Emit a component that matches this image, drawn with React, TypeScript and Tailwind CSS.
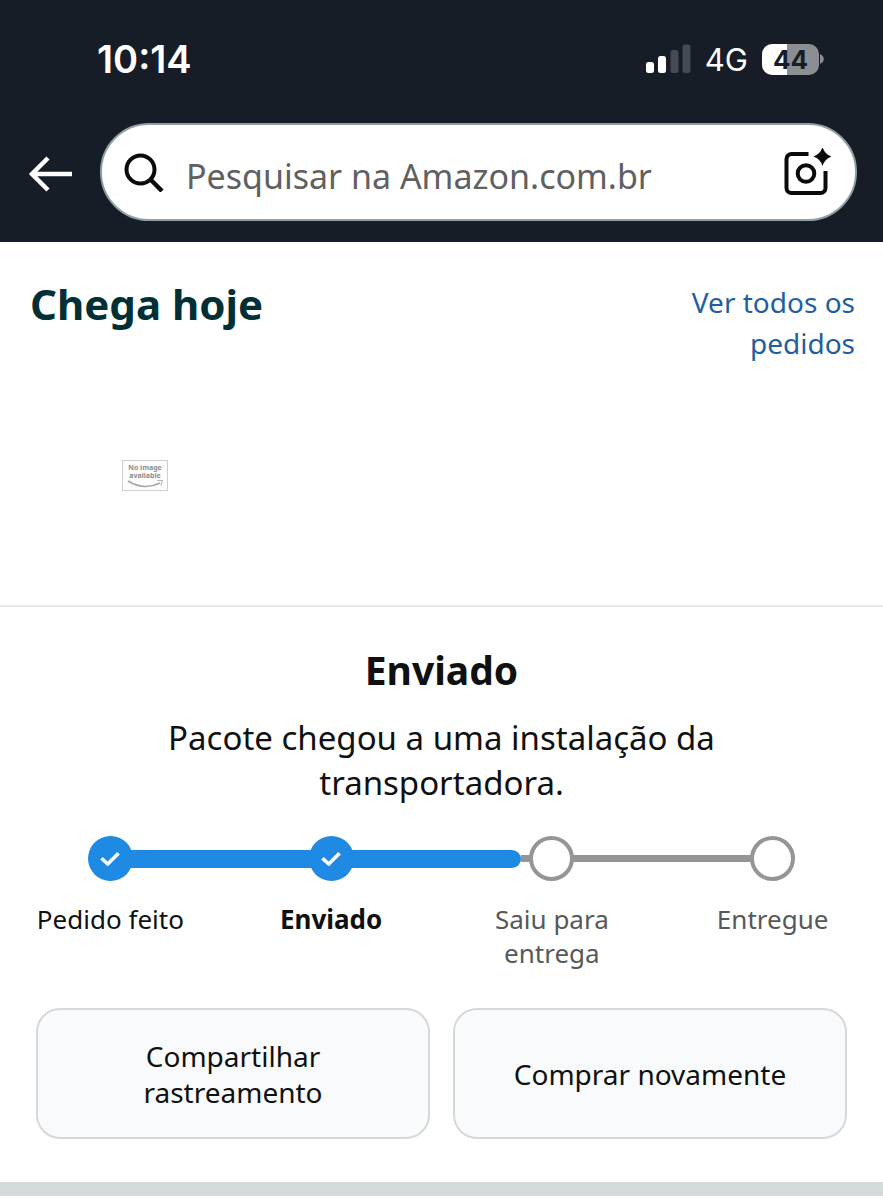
import React, { useState } from "react";
import clsx from "clsx";

interface Step {
  label: string;
  state: "done" | "current" | "pending";
}

const steps: Step[] = [
  { label: "Pedido feito", state: "done" },
  { label: "Enviado", state: "current" },
  { label: "Saiu para entrega", state: "pending" },
  { label: "Entregue", state: "pending" },
];

// Share of the rail that is already covered
const progress = 62;

function StatusBar() {
  return (
    <div className="flex items-center justify-between pl-[97px] pr-[59px] h-[118px] font-['Inter',sans-serif] text-white">
      <span className="text-[38px] leading-none font-semibold">10:14</span>
      <div className="flex items-center gap-3.5">
        <svg className="w-[46px] h-[30px]" viewBox="0 0 46 30" aria-hidden="true">
          <rect x="1" y="18" width="8" height="11" rx="2.5" fill="#fff" />
          <rect x="13" y="12" width="8" height="17" rx="2.5" fill="#fff" />
          <rect x="25.5" y="6" width="8" height="23" rx="2.5" fill="#454b54" />
          <rect x="37.500" y="0.500" width="8" height="28.500" rx="2.5" fill="#454b54" />
        </svg>
        <span className="text-[31px] leading-none">4G</span>
        <div className="flex items-center gap-px">
          <span className="flex items-center justify-center w-[57px] h-[31px] rounded-[10px] bg-linear-to-r from-white from-44% to-[#8b8e93] to-44% text-[26px] leading-[31px] font-bold text-[#161d26]">
            44
          </span>
          <svg className="w-1 h-2.5" viewBox="0 0 4 10" aria-hidden="true">
            <path d="M0 0C5 2 5 8 0 10Z" fill="#8b8e93" />
          </svg>
        </div>
      </div>
    </div>
  );
}

function SearchBar() {
  const [query, setQuery] = useState("");

  return (
    <div className="flex items-center gap-7 pl-7 pr-[26px] pt-[5px] pb-[21px]">
      <button type="button" aria-label="Voltar" className="shrink-0 pt-1">
        <svg className="w-11 h-9" viewBox="0 0 44 36" fill="none" stroke="#fff" strokeWidth="4.5" aria-hidden="true">
          <path d="M44 18H4M20 2L4 18L20 34" />
        </svg>
      </button>
      <div className="flex flex-1 min-w-0 items-center h-[98px] pl-[22px] pr-6 rounded-full bg-white border-2 border-[#8fa0a3]">
        <svg className="shrink-0 w-10 h-10" viewBox="0 0 40 40" fill="none" stroke="#0a0a0a" strokeWidth="4" aria-hidden="true">
          <circle cx="16.5" cy="17.5" r="14" />
          <path d="M26.5 27.5L38 39" strokeWidth="4.5" />
        </svg>
        <input
          type="text"
          aria-label="Pesquisar na Amazon.com.br"
          placeholder="Pesquisar na Amazon.com.br"
          value={query}
          onChange={(e) => setQuery(e.target.value)}
          className="flex-1 min-w-0 ml-[22px] pt-2 bg-transparent text-[34px] text-[#0f1111] placeholder:text-[#5f6061] outline-none"
        />
        <button type="button" aria-label="Pesquisar por imagem" className="shrink-0">
          <svg className="w-12 h-12" viewBox="0 0 48 48" fill="none" aria-hidden="true">
            <path
              d="M25.500 6H8.500a5 5 0 0 0-5 5V40a5 5 0 0 0 5 5H37.500a5 5 0 0 0 5-5V23"
              stroke="#0a0a0a"
              strokeWidth="4"
            />
            <circle cx="23" cy="25.5" r="8.300" stroke="#0a0a0a" strokeWidth="4" />
            <path d="M39.500 -1Q41.500 6 48.500 8.500Q41.500 11 39.500 18Q37.500 11 30.500 8.500Q37.500 6 39.500 -1Z" fill="#0a0a0a" />
          </svg>
        </button>
      </div>
    </div>
  );
}

function StepMarker({ state }: { state: Step["state"] }) {
  if (state === "pending") {
    return <span className="w-[45px] h-[45px] rounded-full border-4 border-[#969494] bg-white" />;
  }
  return (
    <span className="flex items-center justify-center w-[45px] h-[45px] rounded-full bg-[#1f8ae4]">
      <svg className="w-5 h-4" viewBox="0 0 20 16" fill="none" stroke="#fff" strokeWidth="3.6" aria-hidden="true">
        <path d="M1.500 7.200L7.700 13L18.500 2.200" strokeLinejoin="round" />
      </svg>
    </span>
  );
}

export default function App() {
  return (
    <div className="min-h-screen bg-white font-['Noto_Sans',sans-serif] text-[#0f1111]">
      <header className="bg-[#161d26]">
        <StatusBar />
        <SearchBar />
      </header>

      <main>
        {/* Order summary */}
        <section className="flex flex-col h-[365px] border-b-2 border-[#e6e7e7]">
          <div className="flex items-start justify-between pl-[30px] pr-7 pt-10">
            <h1 className="text-[42px] leading-[44px] font-bold text-[#002f36]">Chega hoje</h1>
            <a href="#" className="w-48 text-right text-[28px] leading-[41px] text-[#1f5f9f]">
              Ver todos os pedidos
            </a>
          </div>
          <svg className="w-[46px] h-[31px] ml-[122px] mt-24" viewBox="0 0 46 31" role="img" aria-label="No image available">
            <rect x="0.500" y="0.500" width="45" height="30" fill="#fdfdfd" stroke="#cfcfcf" />
            <text x="23" y="10" textAnchor="middle" fontSize="7" fontWeight="bold" fill="#8c8c8c">
              No image
            </text>
            <text x="23" y="18" textAnchor="middle" fontSize="7" fontWeight="bold" fill="#8c8c8c">
              available
            </text>
            <path d="M6 21Q22 31 38 23" fill="none" stroke="#a5a5a5" strokeWidth="1.500" />
            <path d="M35 20.500L40.500 20.500L39 26" fill="none" stroke="#b5b5b5" />
          </svg>
        </section>

        {/* Tracking */}
        <section className="pt-10 pb-[43px]">
          <div className="px-32 text-center">
            <h2 className="text-[39px] leading-[46px] font-bold">Enviado</h2>
            <p className="mt-[22px] text-[33px] leading-[45px]">Pacote chegou a uma instalação da transportadora.</p>
          </div>

          <div className="relative mt-[31px]">
            <div className="absolute inset-x-[12.5%] top-0 flex items-center h-[45px]">
              <div className="h-[18px] rounded-r-full bg-[#1f8ae4]" style={{ width: `${progress}%` }} />
              <div className="flex-1 h-[7px] bg-[#969494]" />
            </div>
            <ol className="relative grid grid-cols-4">
              {steps.map((step) => (
                <li key={step.label} className="flex flex-col items-center">
                  <StepMarker state={step.state} />
                  <span
                    className={clsx(
                      "mt-[21px] px-8 text-center text-[26px] leading-[34px]",
                      step.state === "current" && "font-bold",
                      step.state === "pending" && "text-[#565959]"
                    )}
                  >
                    {step.label}
                  </span>
                </li>
              ))}
            </ol>
          </div>

          <div className="grid grid-cols-2 gap-[23px] px-9 mt-[38px]">
            <button
              type="button"
              className="h-[131px] px-20 rounded-3xl border-2 border-[#d5d9d9] bg-[#f9fafc] text-[28px] leading-9"
            >
              Compartilhar rastreamento
            </button>
            <button
              type="button"
              className="h-[131px] px-8 rounded-3xl border-2 border-[#d5d9d9] bg-[#f9fafc] text-[28px] leading-9"
            >
              Comprar novamente
            </button>
          </div>
        </section>

        <div className="h-3.5 bg-[#d5dbdb]" />
      </main>
    </div>
  );
}
